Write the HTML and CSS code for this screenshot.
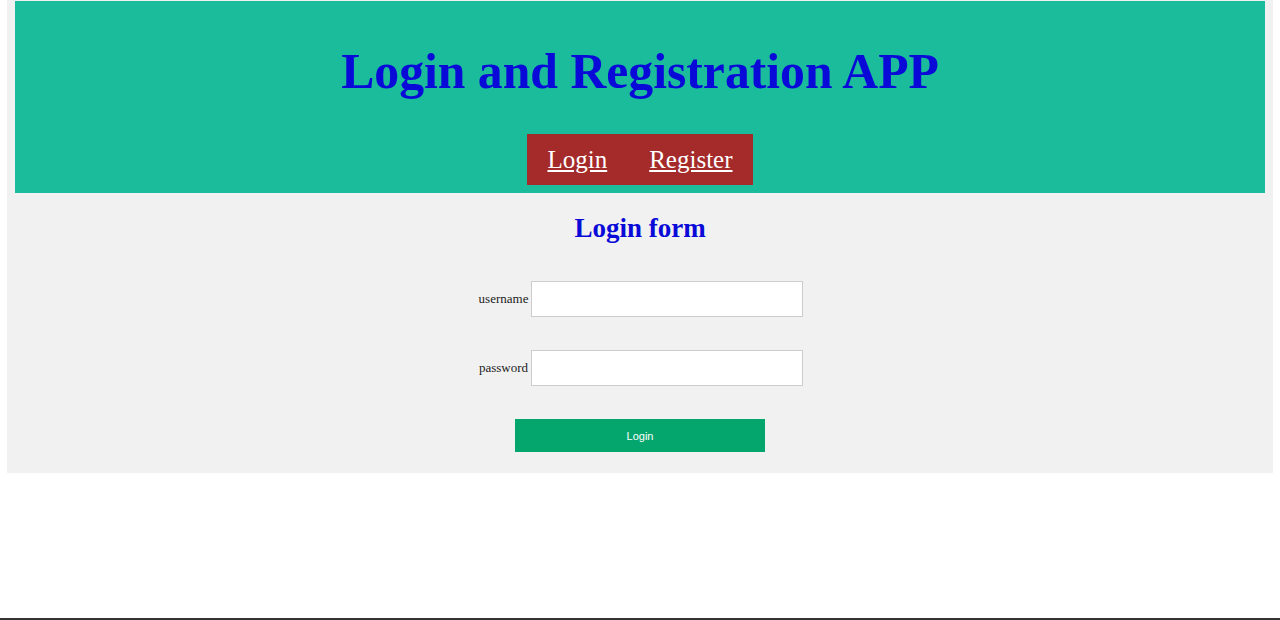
FILE: index.html
```html
<!DOCTYPE html>
<html>
<head>
<meta charset="utf-8">
<link rel="stylesheet" href="styles.css">
</head>
<body>
<div class="page">
  <div class="container">
    <header class="header">
      <h1 class="title">Login and Registration APP</h1>
      <nav class="nav">
        <a href="#" class="nav-link">Login</a>
        <a href="#" class="nav-link">Register</a>
      </nav>
    </header>
    <main class="content">
      <h2 class="form-title">Login form</h2>
      <form class="form">
        <div class="row">
          <label class="label">username</label>
          <input class="input" type="text">
        </div>
        <div class="row">
          <label class="label">password</label>
          <input class="input" type="password">
        </div>
        <button class="btn" type="button">Login</button>
      </form>
    </main>
  </div>
</div>
</body>
</html>
```
FILE: styles.css
```css
html, body {
  margin: 0;
  padding: 0;
  background: #fff;
}
body {
  font-family: "Liberation Serif", "Times New Roman", serif;
}
.page {
  height: 618px;
  border-bottom: 2px solid #333;
  padding: 0 7px;
}
.container {
  background: #f1f1f1;
  padding: 1px 8px 21px;
}
.header {
  background: #1abc9c;
  display: flex;
  flex-direction: column;
  align-items: center;
  padding: 0 0 8px;
}
.title {
  margin: 41px 0 32px;
  font-size: 49.7px;
  line-height: 60px;
  color: #0a0ad8;
  font-weight: bold;
}
.nav {
  background: #a52a2a;
  display: flex;
  gap: 42px;
  padding: 0 20px;
  height: 51px;
  align-items: center;
}
.nav-link {
  color: #fff;
  font-size: 25px;
  text-decoration: underline;
}
.content {
  display: flex;
  flex-direction: column;
  align-items: center;
}
.form-title {
  margin: 19px 0 37px;
  font-size: 27px;
  line-height: 32px;
  color: #0a0ad8;
  font-weight: bold;
}
.form {
  display: flex;
  flex-direction: column;
  align-items: center;
}
.row {
  display: flex;
  align-items: center;
  gap: 3px;
  margin: 0 0 33px 2px;
}
.label {
  font-size: 13px;
  color: #222;
}
.input {
  width: 272px;
  height: 36px;
  box-sizing: border-box;
  border: 1px solid #ccc;
  background: #fff;
  margin: 0;
}
.btn {
  width: 250px;
  height: 33px;
  background: #04a66e;
  color: #fff;
  border: none;
  font-family: "Liberation Sans", Arial, sans-serif;
  font-size: 11px;
  margin: 0;
}
```
